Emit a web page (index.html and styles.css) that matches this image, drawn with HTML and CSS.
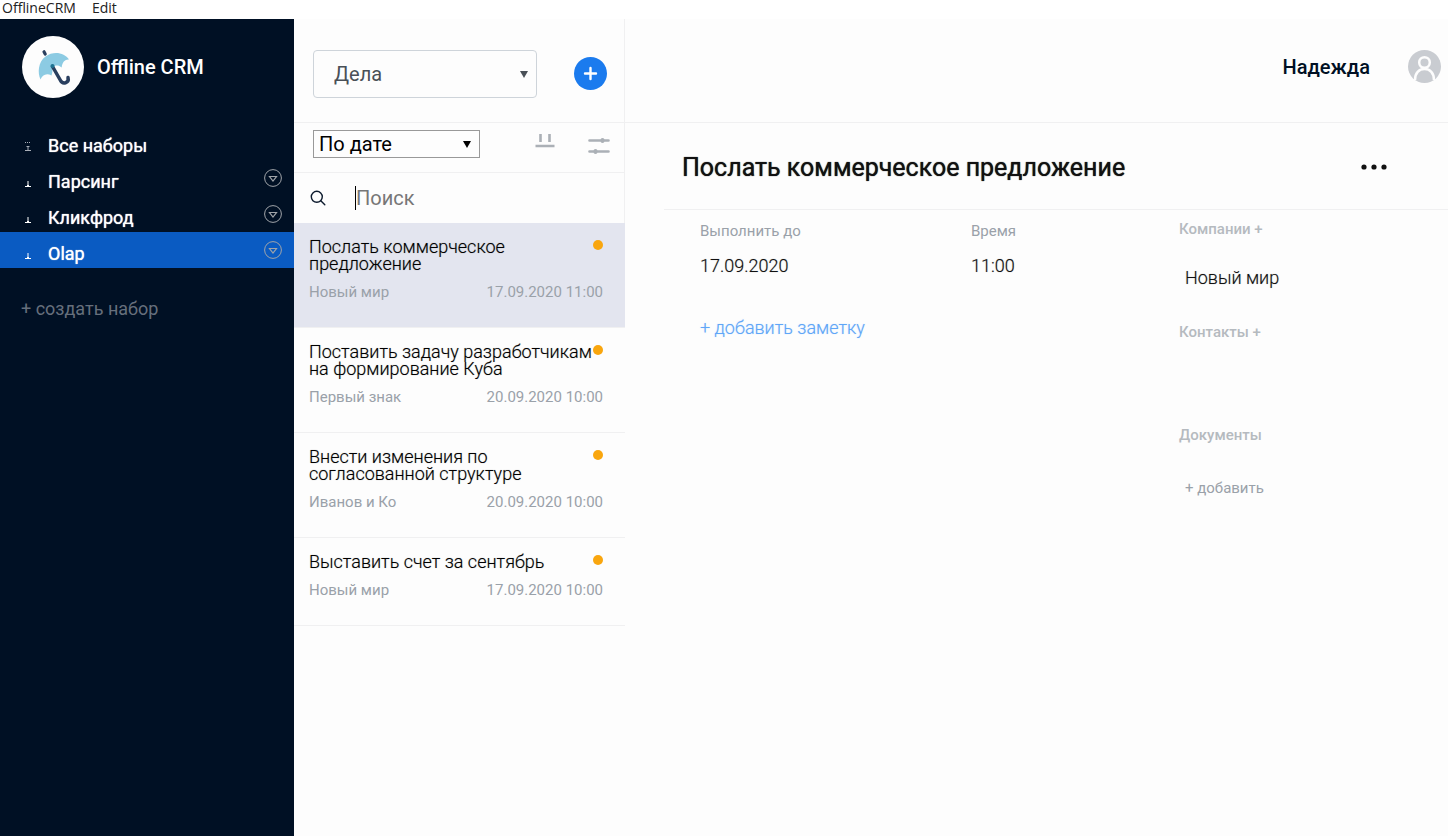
FILE: index.html
```html
<!DOCTYPE html>
<html lang="ru">
<head>
  <meta charset="UTF-8" />
  <title>OfflineCRM</title>
  <meta name="viewport" content="width=device-width, initial-scale=1.0" />
  <link rel="stylesheet" href="styles.css">
</head>
<body>

  <!-- App menu -->
  <div class="menubar">
    <button type="button">OfflineCRM</button>
    <button type="button">Edit</button>
  </div>

  <div class="app">

    <!-- Sidebar -->
    <aside class="sidebar">
      <div class="brand">
        <svg class="logo" width="62" height="62" viewBox="0 0 62 62">
          <circle cx="31" cy="31" r="31" fill="#fdfdfd" />
          <path d="M22 15.800l1.200 2.200" stroke="#2a3f5f" stroke-width="3.200" stroke-linecap="round" />
          <path d="M18.500 43.500C15.500 37 16 26 23.500 20.500C31.500 14.500 42.500 16.500 47 23.500C43.500 23 40 26 39.700 31.500C36.500 28.500 33 29 30.500 31.200C30.500 34.500 30.500 36.500 29.500 39.500C24.500 36.500 20 39 18.500 43.500Z" fill="#8ccbe3" />
          <path d="M30.500 30.500L38.500 44.500C40.500 48.500 47.500 47.500 46 41.500" fill="none" stroke="#2a3f5f" stroke-width="3.500" stroke-linecap="round" />
          <circle cx="30.500" cy="30" r="2" fill="#1f7391" />
        </svg>
        <span>Offline CRM</span>
      </div>

      <nav class="sets">
        <div class="set">
          <a href="#">
            <svg width="8" height="12" viewBox="0 0 8 12" stroke="#a9afb8">
              <path d="M1 3.500h6" stroke-dasharray="1 1" />
              <path d="M4 7v4M2.500 7.500h3M1 11.500h6" />
            </svg>
            Все наборы
          </a>
        </div>
        <div class="set">
          <a href="#">
            <svg width="8" height="12" viewBox="0 0 8 12" stroke="#fff"><path d="M4 6v5M3 10.500h2M1 11.500h6" /></svg>
            Парсинг
          </a>
          <button type="button" aria-label="Меню Парсинг">
            <svg width="18" height="18" viewBox="0 0 18 18" fill="none" stroke="#a0a4a9"><circle cx="9" cy="9" r="8.400" /><path d="M5.500 7.500h7L9 12z" stroke-width="1.200" /></svg>
          </button>
        </div>
        <div class="set">
          <a href="#">
            <svg width="8" height="12" viewBox="0 0 8 12" stroke="#fff"><path d="M4 6v5M3 10.500h2M1 11.500h6" /></svg>
            Кликфрод
          </a>
          <button type="button" aria-label="Меню Кликфрод">
            <svg width="18" height="18" viewBox="0 0 18 18" fill="none" stroke="#a0a4a9"><circle cx="9" cy="9" r="8.400" /><path d="M5.500 7.500h7L9 12z" stroke-width="1.200" /></svg>
          </button>
        </div>
        <div class="set active">
          <a href="#">
            <svg width="8" height="12" viewBox="0 0 8 12" stroke="#fff"><path d="M4 6v5M3 10.500h2M1 11.500h6" /></svg>
            Olap
          </a>
          <button type="button" aria-label="Меню Olap">
            <svg width="18" height="18" viewBox="0 0 18 18" fill="none" stroke="#a0a4a9"><circle cx="9" cy="9" r="8.400" /><path d="M5.500 7.500h7L9 12z" stroke-width="1.200" /></svg>
          </button>
        </div>
      </nav>

      <button type="button" class="create-set">+ создать набор</button>
    </aside>

    <!-- Task list -->
    <section class="list">
      <div class="list-head">
        <div class="select-box select-type">
          <select aria-label="Раздел">
            <option>Дела</option>
          </select>
        </div>
        <button type="button" class="add-btn" aria-label="Добавить дело">
          <svg width="33" height="33" viewBox="0 0 33 33"><circle cx="16.500" cy="16.500" r="16.500" fill="#1b7bee" /><path d="M16.500 11v11M11 16.500h11" stroke="#fff" stroke-width="2.400" stroke-linecap="round" /></svg>
        </button>
      </div>

      <div class="list-tools">
        <div class="select-box select-sort">
          <select aria-label="Сортировка">
            <option>По дате</option>
          </select>
        </div>
        <button type="button" class="group-btn" aria-label="Группировка">
          <svg width="20" height="14" viewBox="0 0 20 14" stroke="#abb0b6" stroke-width="2.600"><path d="M5.500 0v8M14.500 0v8M.500 12h19" /></svg>
        </button>
        <button type="button" aria-label="Фильтр">
          <svg width="22" height="16" viewBox="0 0 22 16" stroke="#abb0b6" stroke-width="2.600" stroke-linecap="round"><path d="M1.500 2.500h19M1.500 13.500h19" /><path d="M14.500 2v1M7.500 13v1" stroke-width="4" /></svg>
        </button>
      </div>

      <div class="search">
        <label for="search" aria-label="Поиск">
          <svg width="16" height="16" viewBox="0 0 16 16" fill="none" stroke="#0d1b2e" stroke-width="1.400" stroke-linecap="round"><circle cx="6.800" cy="6.800" r="5.500" /><path d="M10.800 10.800l4 4" /></svg>
        </label>
        <input type="text" id="search" placeholder="Поиск">
      </div>

      <div class="tasks">
        <article class="task active">
          <div class="task-title"><h3>Послать коммерческое предложение</h3><i class="dot"></i></div>
          <div class="task-meta"><span>Новый мир</span><time>17.09.2020 11:00</time></div>
        </article>
        <article class="task">
          <div class="task-title"><h3>Поставить задачу разработчикам на формирование Куба</h3><i class="dot"></i></div>
          <div class="task-meta"><span>Первый знак</span><time>20.09.2020 10:00</time></div>
        </article>
        <article class="task">
          <div class="task-title"><h3>Внести изменения по согласованной структуре</h3><i class="dot"></i></div>
          <div class="task-meta"><span>Иванов и Ко</span><time>20.09.2020 10:00</time></div>
        </article>
        <article class="task">
          <div class="task-title"><h3>Выставить счет за сентябрь</h3><i class="dot"></i></div>
          <div class="task-meta"><span>Новый мир</span><time>17.09.2020 10:00</time></div>
        </article>
      </div>
    </section>

    <!-- Task details -->
    <main class="main">
      <header class="user">
        <span>Надежда</span>
        <svg width="33" height="33" viewBox="0 0 33 33">
          <circle cx="16.500" cy="16.500" r="16.500" fill="#c9ccd1" />
          <g fill="none" stroke="#fdfdfd" stroke-width="2.500"><circle cx="16.500" cy="12.500" r="5.300" /><path d="M7 30c0-7 4-11 9.500-11s9.500 4 9.500 11" /></g>
        </svg>
      </header>

      <div class="detail">
        <div class="detail-head">
          <h1>Послать коммерческое предложение</h1>
          <button type="button" aria-label="Ещё">
            <svg width="26" height="6" viewBox="0 0 26 6" fill="#111"><circle cx="3" cy="3" r="2.600" /><circle cx="13" cy="3" r="2.600" /><circle cx="23" cy="3" r="2.600" /></svg>
          </button>
        </div>

        <div class="detail-body">
          <div class="field">
            <span class="label">Выполнить до</span>
            <span class="value">17.09.2020</span>
            <button type="button" class="add-note">+ добавить заметку</button>
          </div>
          <div class="field">
            <span class="label">Время</span>
            <span class="value">11:00</span>
          </div>
          <div class="links">
            <section>
              <h2>Компании +</h2>
              <a href="#">Новый мир</a>
            </section>
            <section>
              <h2>Контакты +</h2>
            </section>
            <section>
              <h2>Документы</h2>
              <button type="button">+ добавить</button>
            </section>
          </div>
        </div>
      </div>
    </main>

  </div>

</body>
</html>
```
FILE: styles.css
```css
* {
  box-sizing: border-box;
}

body {
  margin: 0;
  min-height: 100vh;
  display: flex;
  flex-direction: column;
  font-family: Roboto, sans-serif;
  font-size: 18px;
  background: #fdfdfd;
  color: #111;
}

h1, h2, h3 {
  margin: 0;
}

svg {
  display: block;
  flex: none;
}

a {
  color: inherit;
  text-decoration: none;
}

button {
  padding: 0;
  border: none;
  background: none;
  font: inherit;
  color: inherit;
  cursor: pointer;
}

/* App menu */
.menubar {
  display: flex;
  gap: 16px;
  height: 19px;
  padding: 0 2px 4px;
  background: #fff;
  font-family: "Open Sans", sans-serif;
  font-size: 14px;
  line-height: 14px;
  color: #222;
}

.app {
  flex: 1;
  display: flex;
}

/* Sidebar */
.sidebar {
  flex: 0 0 294px;
  background: #001024;
  color: #fff;
}

.brand {
  display: flex;
  align-items: center;
  gap: 13px;
  height: 105px;
  padding: 0 22px 10px;
  font-size: 20px;
  font-weight: 500;
}

.set {
  display: flex;
  align-items: center;
  justify-content: space-between;
  height: 36px;
  padding: 0 12px 0 24px;
}

.set.active {
  background: #0a5bc2;
}

.set a {
  flex: 1;
  display: flex;
  align-items: center;
  gap: 16px;
  padding-top: 6px;
  text-shadow: 0 0 1px currentColor;
}

.create-set {
  margin: 30px 21px;
  line-height: 22px;
  color: #666f7c;
}

/* Task list */
.list {
  flex: 0 0 331px;
  min-width: 0;
}

.list-head,
.list-tools,
.search {
  display: flex;
  align-items: center;
  border-right: 1px solid #f0f0f1;
}

.list-head,
.list-tools {
  border-bottom: 1px solid #f0f0f1;
}

.list-head {
  justify-content: space-between;
  height: 104px;
  padding: 6px 17px 0 19px;
}

.select-box {
  position: relative;
  color: #495057;
}

.select-box select {
  appearance: none;
  width: 100%;
  height: 100%;
  font-family: inherit;
  font-size: 20px;
  color: inherit;
  background: transparent;
}

.select-box::after {
  content: "";
  position: absolute;
  right: 9px;
  top: 50%;
  margin-top: -3px;
  border: 4px solid transparent;
  border-top: 7px solid currentColor;
  border-bottom: 0;
  pointer-events: none;
}

.select-type {
  width: 224px;
  height: 48px;
}

.select-type select {
  padding: 0 20px;
  border: 1px solid #ced4da;
  border-radius: 4px;
}

.select-sort {
  width: 167px;
  height: 28px;
  margin-right: auto;
  color: #000;
}

.select-sort select {
  padding: 0 5px;
  border: 1px solid #999;
  border-radius: 0;
}

.list-tools {
  height: 50px;
  padding: 0 14px 8px 19px;
}

.list-tools button {
  padding-top: 4px;
}

.list-tools .group-btn {
  margin-right: 33px;
  padding: 0 0 6px;
}

.search {
  gap: 29px;
  height: 50px;
  padding: 0 16px;
}

.search input {
  flex: 1;
  min-width: 0;
  height: 24px;
  padding: 0;
  border: none;
  border-left: 1px solid #000;
  outline: none;
  background: none;
  font-family: inherit;
  font-size: 20px;
}

.search input::placeholder {
  color: #777;
}

.task {
  padding: 15px 22px 26px 15px;
  border-bottom: 1px solid #f0f0f1;
}

.task.active {
  background: #e3e5ef;
}

.task-title {
  display: flex;
  justify-content: space-between;
}

.task-title h3 {
  flex: 1;
  font-size: 18px;
  line-height: 17px;
  font-weight: 300;
  color: #000;
}

.task-title h3,
.value,
.links a {
  text-shadow: 0 0 1px rgba(0,0,0,0.4);
}

.dot {
  flex: none;
  width: 10px;
  height: 10px;
  margin-top: 2px;
  border-radius: 50%;
  background: #f9a60e;
}

.task-meta {
  display: flex;
  justify-content: space-between;
  margin-top: 11px;
  font-size: 15px;
  line-height: 18px;
  color: #9aa1a9;
}

/* Task details */
.main {
  flex: 1;
  min-width: 0;
}

.user {
  display: flex;
  align-items: center;
  justify-content: flex-end;
  gap: 38px;
  height: 104px;
  padding: 0 7px 8px 0;
  border-bottom: 1px solid #f0f0f1;
  font-size: 20px;
  font-weight: 500;
  color: #001024;
}

.detail {
  margin-left: 39px;
}

.detail-head {
  display: flex;
  align-items: center;
  justify-content: space-between;
  height: 87px;
  padding: 2px 61px 0 18px;
  border-bottom: 1px solid #f0f0f1;
}

.detail-head h1 {
  font-size: 25px;
  font-weight: 400;
  text-shadow: 0 0 1px currentColor;
}

.detail-body {
  display: grid;
  grid-template-columns: 271fr 208fr 269fr;
  padding-left: 36px;
}

.field {
  display: flex;
  flex-direction: column;
  align-items: flex-start;
  padding-top: 12px;
}

.label {
  font-size: 15px;
  line-height: 18px;
  color: #9aa1a9;
}

.value {
  margin-top: 15px;
  line-height: 22px;
  font-weight: 300;
  color: #111;
}

.add-note {
  margin-top: 40px;
  line-height: 22px;
  font-weight: 300;
  color: #5fa6f8;
  text-shadow: 0 0 1px rgba(95,166,248,0.5);
}

.links {
  padding-top: 10px;
}

.links section {
  min-height: 103px;
}

.links h2 {
  font-size: 15px;
  line-height: 18px;
  font-weight: 500;
  color: #b5babf;
}

.links a,
.links button {
  display: block;
  margin: 29px 6px 0;
  line-height: 22px;
  font-weight: 300;
  color: #111;
}

.links button {
  margin-top: 33px;
  font-size: 15px;
  font-weight: 400;
  color: #9aa1a9;
}
```
